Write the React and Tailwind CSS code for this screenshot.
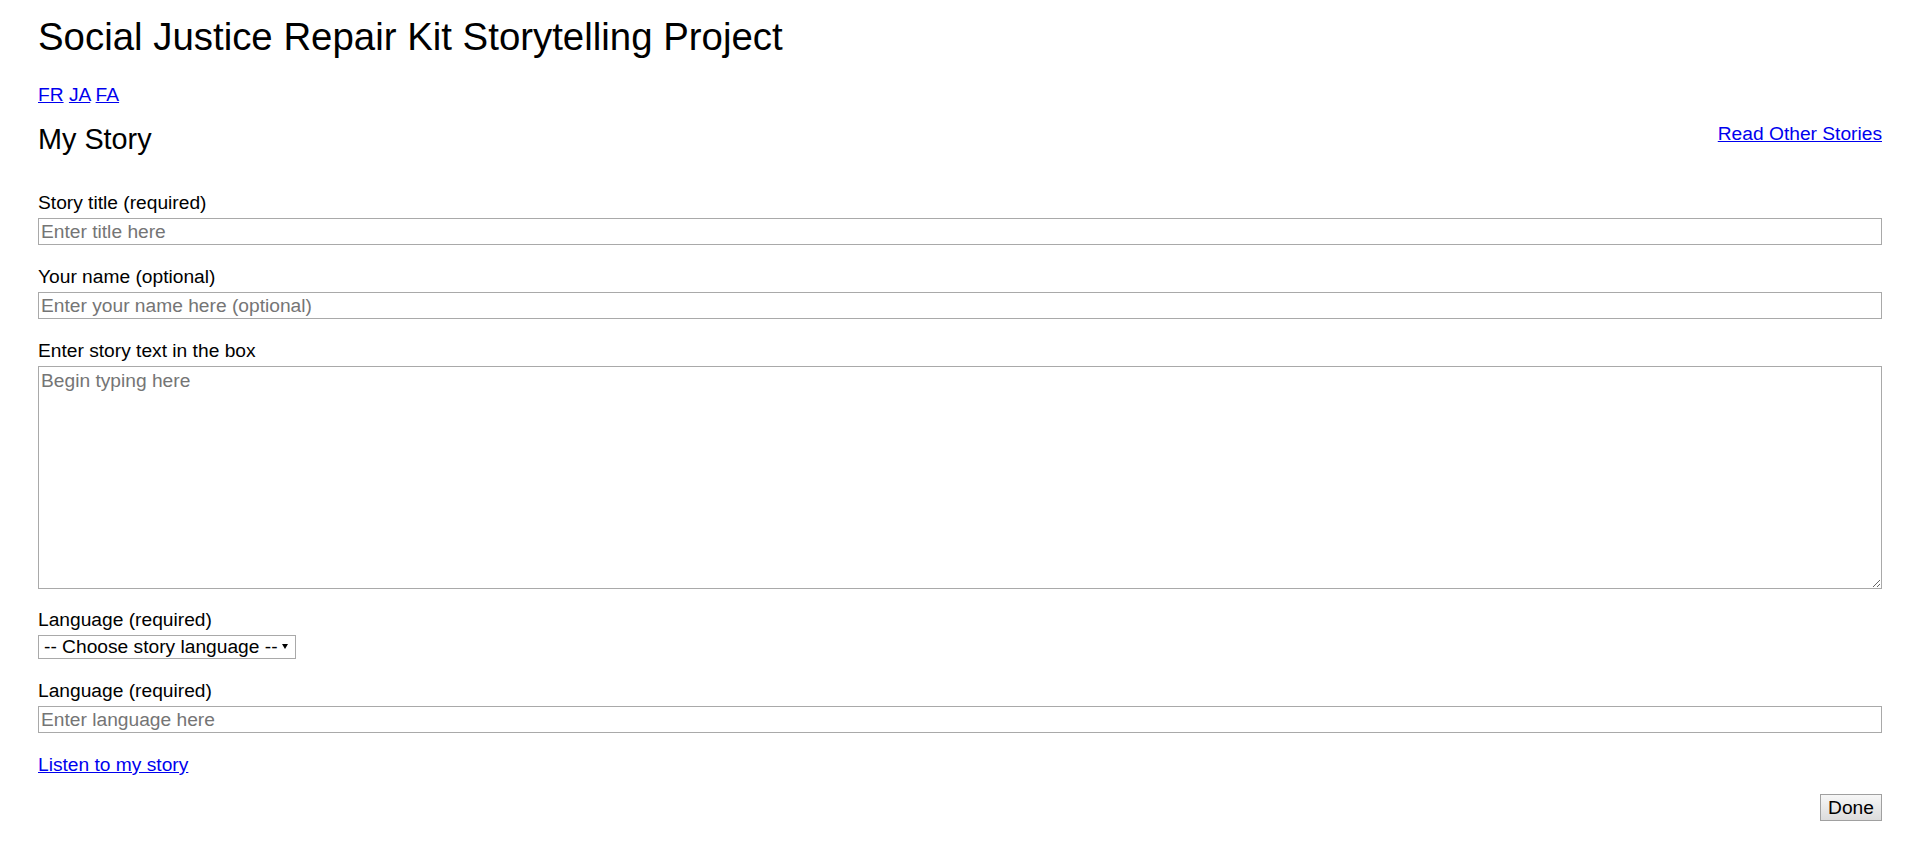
import React from 'react';

const Field = ({ label, placeholder, className = 'mt-[20px]' }) => (
  <div className={className}>
    <label className="block leading-[23px]">{label}</label>
    <input
      type="text"
      placeholder={placeholder}
      className="mt-[4px] block h-[27px] w-full border border-[#a9a9a9] bg-white px-[2px] py-px text-[19.2px] leading-[23px] outline-none placeholder:text-[#757575]"
    />
  </div>
);

const App = () => {
  return (
    <div className="min-h-screen bg-white px-[38px] font-['Liberation_Sans',Arial,sans-serif] text-[19.2px] leading-[23px] text-black">
      <h1 className="pt-[14px] text-[38.4px] font-normal leading-[46px]">
        Social Justice Repair Kit Storytelling Project
      </h1>

      <div className="mt-[23px]">
        <a href="#" className="text-[#0000ee] underline">FR</a>{' '}
        <a href="#" className="text-[#0000ee] underline">JA</a>{' '}
        <a href="#" className="text-[#0000ee] underline">FA</a>
      </div>

      <div className="mt-[16px] flex items-start justify-between">
        <h2 className="text-[28.8px] font-normal leading-[34px]">My Story</h2>
        <a href="#" className="leading-[23px] text-[#0000ee] underline">Read Other Stories</a>
      </div>

      <form className="pt-[15px]" onSubmit={e => e.preventDefault()}>
        <Field label="Story title (required)" placeholder="Enter title here" />
        <Field label="Your name (optional)" placeholder="Enter your name here (optional)" />

        <div className="mt-[20px]">
          <label className="block leading-[23px]">Enter story text in the box</label>
          <textarea
            placeholder="Begin typing here"
            className="mt-[4px] block h-[223px] w-full border border-[#a9a9a9] bg-white p-[2px] text-[19.2px] leading-[23px] outline-none placeholder:text-[#757575]"
          />
        </div>

        <div className="mt-[19px]">
          <label className="block leading-[23px]">Language (required)</label>
          <div className="relative mt-[4px] w-[258px]">
            <select
              defaultValue=""
              className="block h-[24px] w-full appearance-none border border-[#a9a9a9] bg-white pl-[5px] pr-[12px] text-[19.2px] leading-[20px] text-black outline-none"
            >
              <option value="">-- Choose story language --</option>
              <option value="en">English</option>
              <option value="fr">Français</option>
              <option value="ja">日本語</option>
              <option value="fa">فارسی</option>
            </select>
            <span className="pointer-events-none absolute right-[8px] top-[9px] h-0 w-0 border-x-[3px] border-t-[5px] border-x-transparent border-t-black" />
          </div>
        </div>

        <Field label="Language (required)" placeholder="Enter language here" />

        <div className="mt-[20px]">
          <a href="#" className="text-[#0000ee] underline">Listen to my story</a>
        </div>

        <div className="mt-[18px] flex justify-end">
          <button
            type="submit"
            className="h-[27px] w-[62px] border border-[#a0a0a0] bg-gradient-to-b from-[#f7f7f7] to-[#dcdcdc] text-[19.2px] leading-[23px] text-black"
          >
            Done
          </button>
        </div>
      </form>
    </div>
  );
};

export default App;
